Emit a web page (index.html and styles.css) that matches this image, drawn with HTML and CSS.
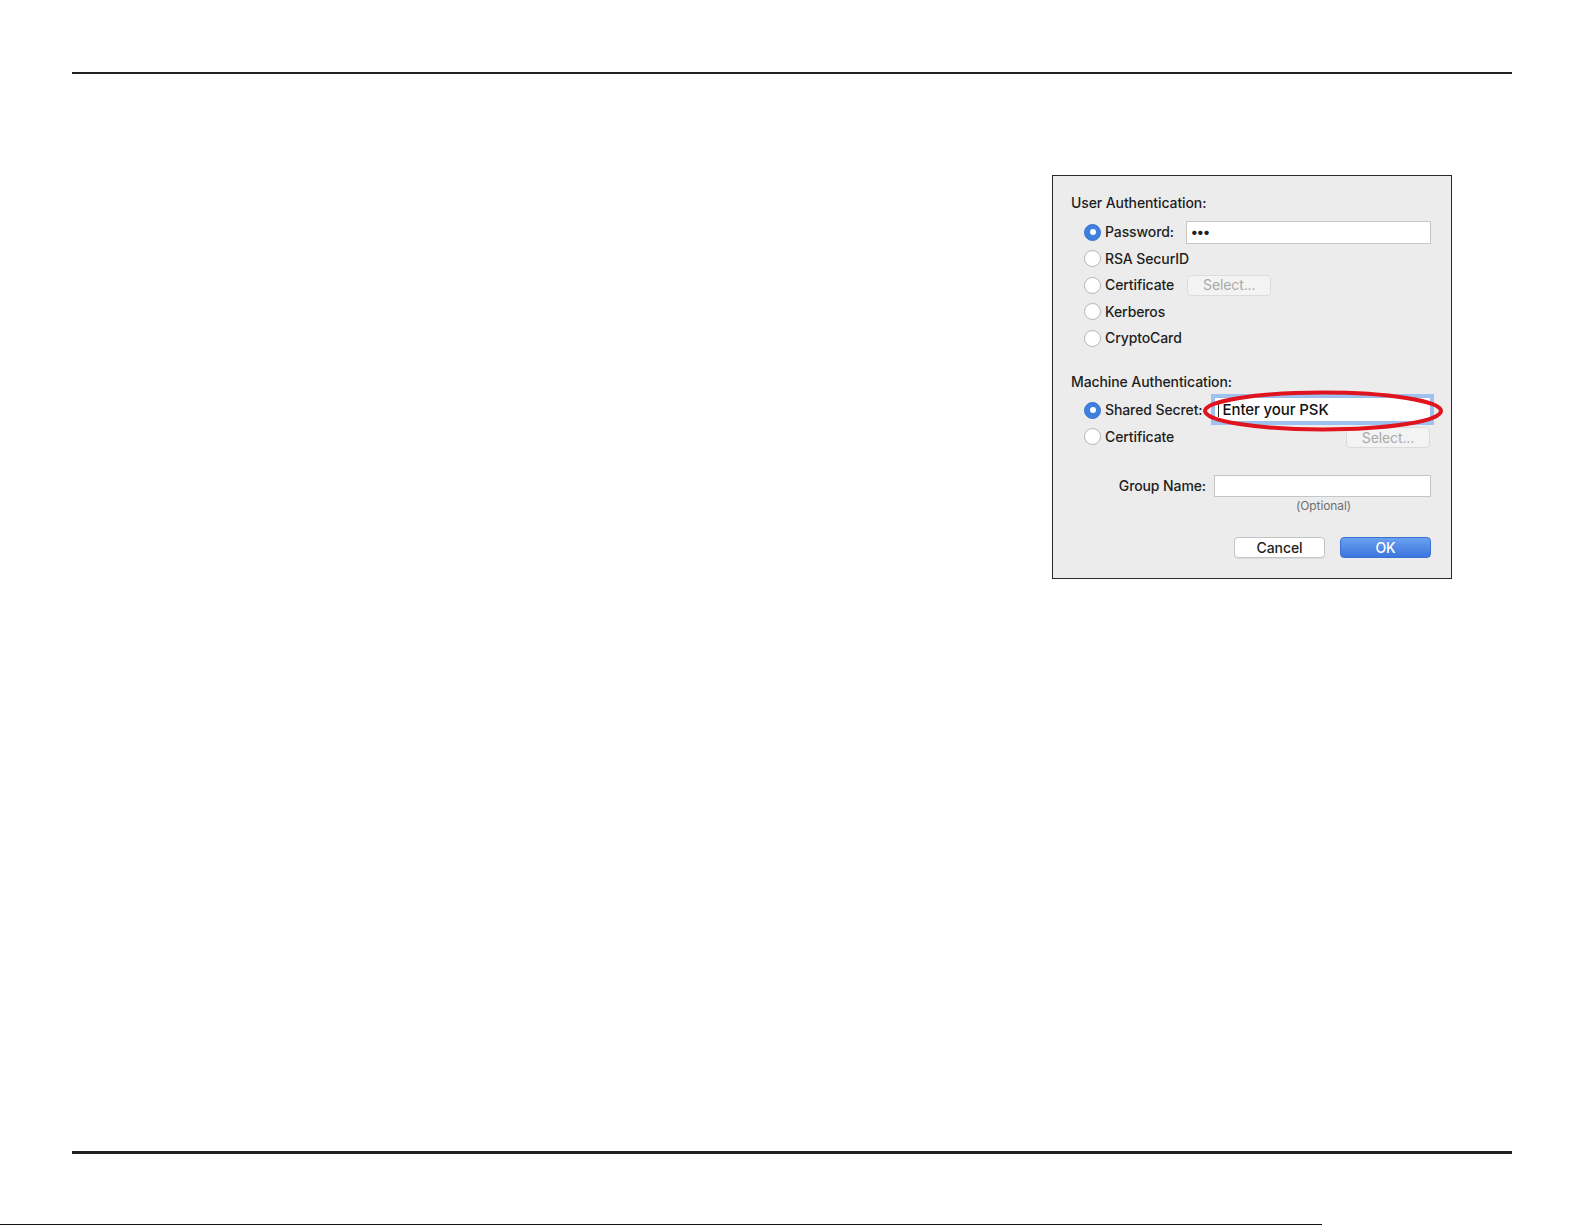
FILE: index.html
```html
<!DOCTYPE html>
<html lang="en">
<head>
<meta charset="utf-8">
<title>VPN Authentication Settings</title>
<link rel="stylesheet" href="styles.css">
</head>
<body>
<div class="page">
  <hr class="rule rule-top">
  <main class="content">
    <section class="dialog">
      <div class="section-title">User Authentication:</div>
      <div class="options">
        <div class="row">
          <span class="radio checked"></span>
          <span class="label">Password:</span>
          <span class="field grow dots">&bull;&bull;&bull;</span>
        </div>
        <div class="row">
          <span class="radio"></span>
          <span class="label">RSA SecurID</span>
        </div>
        <div class="row">
          <span class="radio"></span>
          <span class="label">Certificate</span>
          <span class="btn disabled cert-btn">Select...</span>
        </div>
        <div class="row">
          <span class="radio"></span>
          <span class="label">Kerberos</span>
        </div>
        <div class="row">
          <span class="radio"></span>
          <span class="label">CryptoCard</span>
        </div>
      </div>

      <div class="section-title machine-title">Machine Authentication:</div>
      <div class="options machine">
        <div class="row">
          <span class="radio checked"></span>
          <span class="label">Shared Secret:</span>
          <span class="field grow focused"><span class="caret"></span>Enter your PSK</span>
        </div>
        <div class="row">
          <span class="radio"></span>
          <span class="label">Certificate</span>
          <span class="btn disabled push-right">Select...</span>
        </div>
      </div>

      <div class="group-row">
        <span class="label">Group Name:</span>
        <span class="field group-field"></span>
      </div>
      <div class="optional">(Optional)</div>

      <div class="actions">
        <span class="btn cancel">Cancel</span>
        <span class="btn primary">OK</span>
      </div>

      <svg class="highlight" width="244" height="45" viewBox="0 0 244 45" aria-hidden="true">
        <ellipse cx="121" cy="22" rx="118" ry="18.5" fill="none" stroke="#e0141e" stroke-width="4"/>
      </svg>
    </section>
  </main>
  <hr class="rule rule-bottom">
  <div class="edge"></div>
</div>
</body>
</html>
```

FILE: styles.css
```css
html, body {
  margin: 0;
  padding: 0;
  background: #ffffff;
}

body {
  font-family: "Inter", "Liberation Sans", Arial, sans-serif;
  color: #1e1e1e;
  width: 1585px;
  height: 1225px;
  overflow: hidden;
}

.page {
  padding-top: 72px;
}

.rule {
  border: 0;
  margin: 0 73px 0 72px;
  height: 2px;
  background: #231f20;
}

.content {
  height: 1077px;
  box-sizing: border-box;
  padding-top: 101px;
  padding-right: 133px;
  display: flex;
  justify-content: flex-end;
  align-items: flex-start;
}

.rule-bottom {
  height: 3px;
  margin-top: 0;
}

.edge {
  margin-top: 70px;
  width: 1322px;
  height: 1px;
  background: #111;
}

/* Dialog */
.dialog {
  position: relative;
  width: 360px;
  padding: 17px 20px 20px 18px;
  background: #ececec;
  border: 1px solid #2a2a2a;
  font-size: 14px;
  font-weight: 500;
  line-height: 20px;
  letter-spacing: -0.1px;
}

.section-title {
  height: 20px;
}

.options {
  margin-top: 6px;
  padding-left: 13px;
}

.machine-title {
  margin-top: 20.5px;
}

.options.machine {
  margin-top: 5px;
}

.row {
  height: 26.5px;
  display: flex;
  align-items: center;
}

.radio {
  flex: none;
  width: 15px;
  height: 15px;
  border-radius: 50%;
  border: 1px solid #b4b4b4;
  background: #ffffff;
  margin-right: 4px;
  box-sizing: content-box;
  position: relative;
}

.radio.checked {
  background: #3f7fe0;
  border-color: #3a72cc;
}

.radio.checked::after {
  content: "";
  position: absolute;
  left: 4.5px;
  top: 4.5px;
  width: 6px;
  height: 6px;
  border-radius: 50%;
  background: #ffffff;
}

.label {
  white-space: nowrap;
}

.field {
  display: block;
  box-sizing: border-box;
  height: 23px;
  background: #ffffff;
  border: 1px solid #c6c6c6;
  margin-left: 12px;
  padding: 0 4px;
  line-height: 21px;
}

.grow {
  flex: 1;
}

.dots {
  font-size: 14px;
  font-weight: 700;
  letter-spacing: -0.5px;
  line-height: 20px;
}

.focused {
  height: 25px;
  margin-left: 11px;
  margin-top: -2px;
  border-color: #9cbde9;
  box-shadow: 0 0 0 3px #9fc1ef;
  padding-left: 3px;
  font-size: 15px;
  color: #111;
  display: flex;
  align-items: center;
}

.caret {
  display: inline-block;
  width: 1px;
  height: 16px;
  background: #222;
  margin-right: 4px;
}

.btn {
  display: flex;
  align-items: center;
  justify-content: center;
  box-sizing: border-box;
  height: 21px;
  border-radius: 4px;
  font-size: 14px;
}

.btn.disabled {
  width: 84px;
  background: #f3f3f3;
  border: 1px solid #dcdcdc;
  color: #a9a9a9;
  font-weight: 400;
}

.cert-btn {
  margin-left: 13px;
}

.push-right {
  margin-left: auto;
  margin-right: 1px;
  margin-top: 2px;
}

.group-row {
  margin-top: 25px;
  display: flex;
  align-items: center;
  justify-content: flex-end;
}

.group-field {
  width: 217px;
  height: 22px;
  margin-left: 8px;
}

.optional {
  margin-top: 2px;
  text-align: right;
  padding-right: 80px;
  font-size: 12px;
  font-weight: 400;
  line-height: 14px;
  color: #707070;
}

.actions {
  margin-top: 24px;
  display: flex;
  justify-content: flex-end;
  gap: 15px;
}

.cancel {
  width: 91px;
  background: #ffffff;
  border: 1px solid #c4c4c4;
  box-shadow: 0 1px 0 rgba(0,0,0,0.06);
  color: #1e1e1e;
}

.primary {
  width: 91px;
  background: linear-gradient(#6aa1f0, #3b75de);
  border: 1px solid #3a70d0;
  color: #ffffff;
}

.highlight {
  position: absolute;
  left: 149px;
  top: 213px;
  overflow: visible;
}
```
